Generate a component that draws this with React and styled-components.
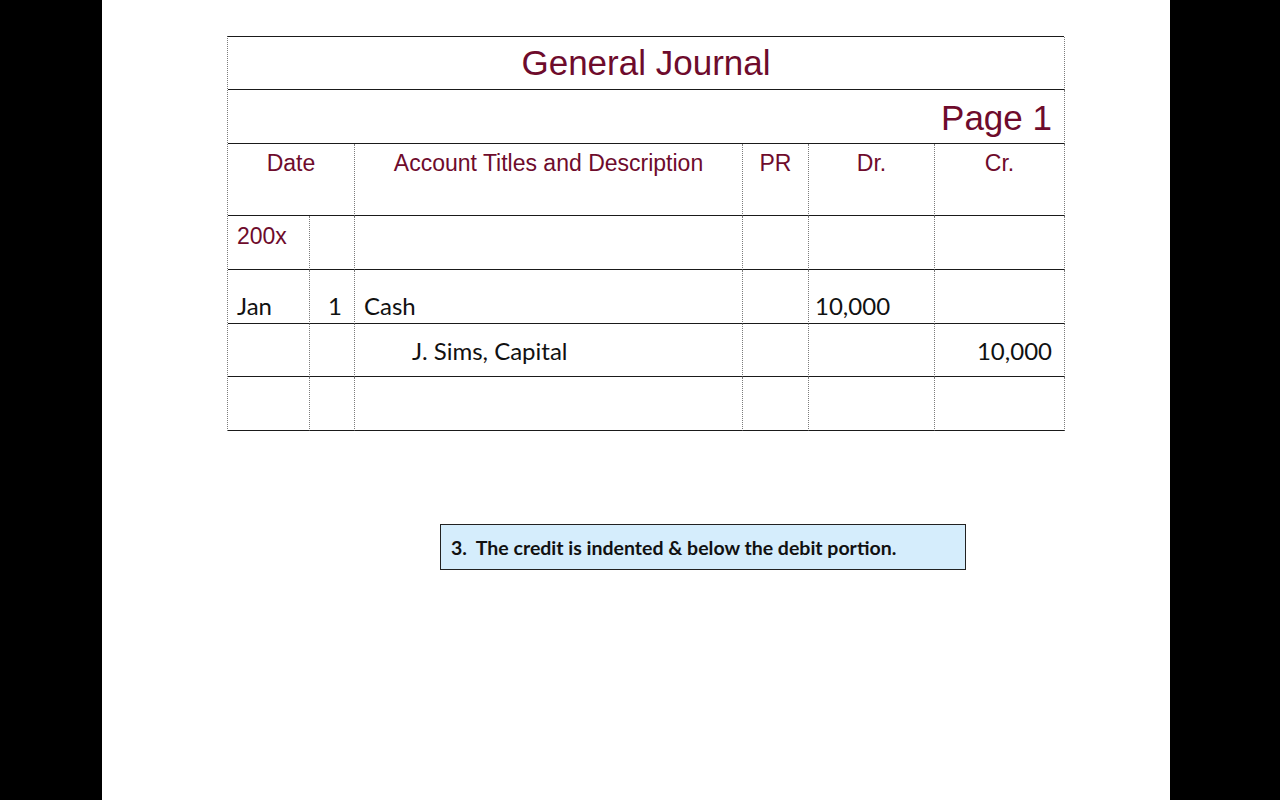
import styled, { createGlobalStyle } from 'styled-components';

const GlobalStyle = createGlobalStyle`
  html, body {
    margin: 0;
    padding: 0;
    background: #000;
  }
`

const MAROON = '#6e0b2c';
const HLINE = '#1a1a1a';
const VLINE = '#7c7c7c';

const rows = [
  { month: '', day: '', account: '', pr: '', dr: '', cr: '', year: '200x', height: 54 },
  { month: 'Jan', day: '1', account: 'Cash', pr: '', dr: '10,000', cr: '', height: 54, align: 'end' },
  { month: '', day: '', account: 'J. Sims, Capital', indent: true, pr: '', dr: '', cr: '10,000', height: 53 },
  { month: '', day: '', account: '', pr: '', dr: '', cr: '', height: 54 },
];

function App() {
  return (
    <>
      <GlobalStyle />
      <Slide>
        <Journal>
          <Title>General Journal</Title>
          <PageRow>Page 1</PageRow>
          <Head $span={2}>Date</Head>
          <Head>Account Titles and Description</Head>
          <Head>PR</Head>
          <Head>Dr.</Head>
          <Head>Cr.</Head>
          {rows.map((r, i) => (
            <Row key={i} $h={r.height}>
              <Cell $align={r.align}>
                {r.year ? <Year>{r.year}</Year> : r.month}
              </Cell>
              <Cell $align={r.align} $right>{r.day}</Cell>
              <Cell $align={r.align} $indent={r.indent}>{r.account}</Cell>
              <Cell $align={r.align}>{r.pr}</Cell>
              <Cell $align={r.align} $pad={6}>{r.dr}</Cell>
              <Cell $align={r.align} $right>{r.cr}</Cell>
            </Row>
          ))}
        </Journal>
        <Callout>3.&nbsp; The credit is indented &amp; below the debit portion.</Callout>
      </Slide>
    </>
  );
}

const Slide = styled.div`
  width: 1068px;
  height: 800px;
  margin-left: 102px;
  background: #fff;
  box-sizing: border-box;
  padding: 36px 0 0 125px;
  display: flex;
  flex-direction: column;
  align-items: flex-start;
`

const Journal = styled.div`
  width: 837px;
  display: grid;
  grid-template-columns: 82px 45px 388px 66px 126px 130px;
  border-top: 1px solid ${HLINE};
  border-left: 1px dotted ${VLINE};
  box-sizing: border-box;
`

const Title = styled.div`
  grid-column: 1 / -1;
  height: 53px;
  box-sizing: border-box;
  border-bottom: 1px solid ${HLINE};
  border-right: 1px dotted ${VLINE};
  display: flex;
  align-items: center;
  justify-content: center;
  font-family: "Liberation Sans", Arial, sans-serif;
  font-size: 35px;
  color: ${MAROON};
`

const PageRow = styled(Title)`
  height: 54px;
  justify-content: flex-end;
  padding-right: 12px;
  padding-top: 2px;
`

const Head = styled.div`
  grid-column: span ${({ $span }) => $span || 1};
  height: 72px;
  border-bottom: 1px solid ${HLINE};
  border-right: 1px dotted ${VLINE};
  text-align: center;
  padding-top: 6px;
  box-sizing: border-box;
  font-family: "Liberation Sans", Arial, sans-serif;
  font-size: 23px;
  color: ${MAROON};
  white-space: nowrap;
`

const Row = styled.div`
  display: contents;
  & > div {
    height: ${({ $h }) => $h}px;
  }
`

const Cell = styled.div`
  border-bottom: 1px solid ${HLINE};
  border-right: 1px dotted ${VLINE};
  box-sizing: border-box;
  display: flex;
  align-items: ${({ $align }) => ($align === 'end' ? 'flex-end' : 'center')};
  justify-content: ${({ $right }) => ($right ? 'flex-end' : 'flex-start')};
  padding-right: ${({ $right }) => ($right ? '12px' : '0')};
  padding-bottom: ${({ $align }) => ($align === 'end' ? '3px' : '0')};
  padding-left: ${({ $indent, $pad }) => ($indent ? '57px' : `${$pad ?? 9}px`)};
  font-family: Lato, "Open Sans", sans-serif;
  font-size: 24px;
  color: #111;
`

const Year = styled.span`
  align-self: flex-start;
  margin-top: 7px;
  font-family: "Liberation Sans", Arial, sans-serif;
  font-size: 23px;
  color: ${MAROON};
`

const Callout = styled.div`
  margin: 93px 0 0 213px;
  width: 526px;
  height: 46px;
  box-sizing: border-box;
  border: 1px solid #222;
  background: #d5edfc;
  display: flex;
  align-items: center;
  padding-left: 10px;
  font-family: Lato, "Open Sans", sans-serif;
  font-weight: 700;
  font-size: 19.5px;
  color: #111;
  white-space: nowrap;
`

export default App;
